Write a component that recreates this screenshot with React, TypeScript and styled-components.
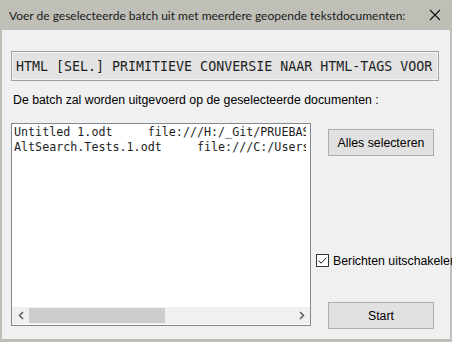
import styled, { createGlobalStyle } from 'styled-components'

const GlobalStyle = createGlobalStyle`
    html, body {
        margin: 0;
        padding: 0;
        background: #bfbfb8;
    }
    * {
        box-sizing: border-box;
    }
`

const Window = styled.div`
    width: 452px;
    height: 342px;
    display: flex;
    flex-direction: column;
    background: #bfbfb8;
    padding: 0 2px 3px 2px;
    overflow: hidden;
`
const TitleBar = styled.div`
    height: 30px;
    display: flex;
    align-items: center;
    justify-content: space-between;
    padding: 0 0 0 7px;
    font-family: Lato, 'Liberation Sans', sans-serif;
    font-size: 12px;
    color: #1a1a1a;
    white-space: nowrap;
`
const CloseBtn = styled.div`
    width: 30px;
    height: 30px;
    flex-shrink: 0;
    display: flex;
    align-items: center;
    justify-content: center;
`
const Content = styled.div`
    flex: 1;
    background: #f0f0f0;
    padding: 21px 11px 10px 9px;
    display: flex;
    flex-direction: column;
    font-family: 'Liberation Sans', Arial, sans-serif;
    font-size: 12.3px;
    color: #000;
`
const CommandBox = styled.div`
    height: 30px;
    width: 428px;
    background: #e3e3e3;
    border: 1px solid #a0a0a0;
    box-shadow: inset 0 0 0 1px #f4f4f4;
    display: flex;
    align-items: center;
    padding-left: 4px;
    font-family: 'DejaVu Sans Mono', 'Liberation Mono', monospace;
    font-size: 13.3px;
    color: #1e1e1e;
    white-space: nowrap;
    overflow: hidden;
`
const Label = styled.div`
    margin-top: 12px;
    padding-left: 2px;
    height: 14px;
    line-height: 14px;
`
const Row = styled.div`
    margin-top: 16px;
    display: flex;
    flex: 1;
`
const ListBox = styled.div`
    width: 300px;
    height: 203px;
    border: 1px solid #828790;
    background: #fff;
    display: flex;
    flex-direction: column;
`
const ListItems = styled.div`
    flex: 1;
    margin-right: 4px;
    padding: 1px 0 0 2px;
    overflow: hidden;
    font-family: 'DejaVu Sans Mono', 'Liberation Mono', monospace;
    font-size: 11.7px;
    color: #1e1e1e;
`
const ListItem = styled.div`
    height: 15px;
    line-height: 15px;
    white-space: pre;
`
const HScroll = styled.div`
    height: 17px;
    background: #f0f0f0;
    display: flex;
    align-items: center;
    margin: 0 0 1px 0;
`
const Arrow = styled.div`
    width: 17px;
    height: 17px;
    display: flex;
    align-items: center;
    justify-content: center;
`
const Track = styled.div`
    flex: 1;
    height: 15px;
    display: flex;
`
const Thumb = styled.div`
    background: #cdcdcd;
    height: 100%;
`
const Side = styled.div`
    margin-left: 17px;
    width: 106px;
    display: flex;
    flex-direction: column;
    padding-top: 6px;
`
const Button = styled.div`
    width: 106px;
    height: 27px;
    background: #e1e1e1;
    border: 1px solid #adadad;
    display: flex;
    align-items: center;
    justify-content: center;
    color: #000;
`
const CheckRow = styled.label`
    margin-top: 98px;
    margin-left: -12px;
    display: flex;
    align-items: center;
    gap: 4px;
    white-space: nowrap;
    height: 13px;
`
const CheckBox = styled.span`
    width: 13px;
    height: 13px;
    border: 1px solid #333;
    background: #fff;
    display: flex;
    align-items: center;
    justify-content: center;
    flex-shrink: 0;
`
const StartWrap = styled.div`
    margin-top: auto;
`

export default function App() {
    return (
        <Window>
            <GlobalStyle />
            <TitleBar>
                <span>Voer de geselecteerde batch uit met meerdere geopende tekstdocumenten:</span>
                <CloseBtn>
                    <svg width="12" height="12" viewBox="0 0 12 12">
                        <path d="M1 1 L11 11 M11 1 L1 11" stroke="#111" strokeWidth="1.1" />
                    </svg>
                </CloseBtn>
            </TitleBar>
            <Content>
                <CommandBox>HTML [SEL.] PRIMITIEVE CONVERSIE NAAR HTML-TAGS VOOR</CommandBox>
                <Label>De batch zal worden uitgevoerd op de geselecteerde documenten :</Label>
                <Row>
                    <ListBox>
                        <ListItems>
                            <ListItem>{'Untitled 1.odt     file:///H:/_Git/PRUEBAS/Tests/Untitled 1.odt'}</ListItem>
                            <ListItem>{'AltSearch.Tests.1.odt     file:///C:/Users/AltSearch.Tests.1.odt'}</ListItem>
                        </ListItems>
                        <HScroll>
                            <Arrow>
                                <svg width="8" height="9" viewBox="0 0 8 9">
                                    <path d="M6 1 L2.5 4.5 L6 8" stroke="#606060" strokeWidth="1.6" fill="none" />
                                </svg>
                            </Arrow>
                            <Track>
                                <Thumb style={{ width: '136px' }} />
                            </Track>
                            <Arrow>
                                <svg width="8" height="9" viewBox="0 0 8 9">
                                    <path d="M2 1 L5.5 4.5 L2 8" stroke="#606060" strokeWidth="1.6" fill="none" />
                                </svg>
                            </Arrow>
                        </HScroll>
                    </ListBox>
                    <Side>
                        <Button>Alles selecteren</Button>
                        <CheckRow>
                            <CheckBox>
                                <svg width="11" height="11" viewBox="0 0 11 11">
                                    <path d="M1.5 5.5 L4.2 8.2 L9.5 2.5" stroke="#222" strokeWidth="1" fill="none" />
                                </svg>
                            </CheckBox>
                            Berichten uitschakelen
                        </CheckRow>
                        <StartWrap>
                            <Button>Start</Button>
                        </StartWrap>
                    </Side>
                </Row>
            </Content>
        </Window>
    )
}
